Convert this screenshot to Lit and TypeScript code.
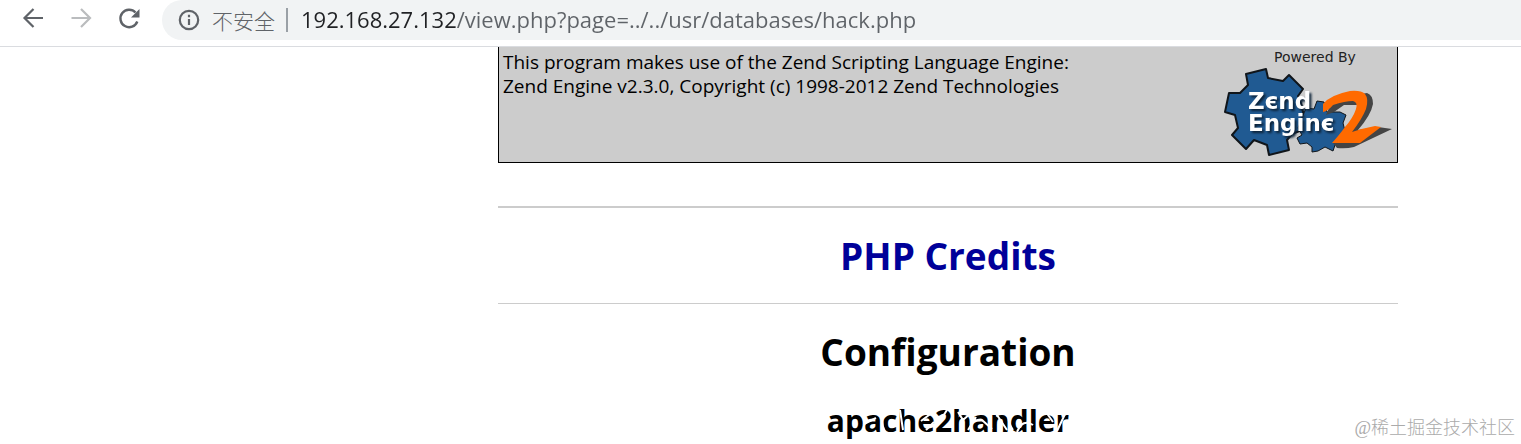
import { LitElement, html, css } from "lit";
import { customElement } from "lit/decorators.js";

@customElement("zend-logo")
class ZendLogo extends LitElement {
  static styles = css`
    :host { display: block; flex: none; }
    .logo { display: block; width: 178px; height: 112px; }
    .powered { font: 14px "DejaVu Sans", sans-serif; fill: #222; }
    .name { font: bold 23px "DejaVu Sans", sans-serif; fill: #fff; filter: drop-shadow(2px 2px 1px #0c2238); }
  `;

  render() {
    return html`
      <svg class="logo" viewBox="1219 47 178 112" role="img" aria-label="Powered by Zend Engine 2">
        <g fill="#205a92" stroke="#10151a" stroke-width="2" stroke-linejoin="round">
          <path d="M1246 74L1266 69L1268 78L1283 81L1289 75L1303 89L1298 96Q1302 104 1303 112L1307 128L1292 134L1287 140L1289 150L1269 155L1267 145L1254 140L1246 149L1232 135L1238 128L1235 115L1225 112L1229 93L1240 93L1248 85Z"/>
          <path stroke-width="1" d="M1306 108L1314 109L1317 101L1324 102L1327 112L1340 112L1346 115L1343 123L1346 135L1335 145L1333 151L1325 147L1318 151L1312 152L1312 147L1307 143L1300 144L1297 138L1302 135L1298 128Z"/>
        </g>
        <path fill="#444" d="M1326 115L1329 108Q1341 96 1355 95L1367 93Q1373 95 1373 104Q1371 115 1358 130L1378 127L1392 129L1354 147Q1346 149 1337 148L1333 143L1349 127Q1358 115 1358 105L1344 105L1334 112Z"/>
        <path fill="#ff6a00" d="M1323 112V104Q1330 95 1350 91Q1361 90 1365 94Q1369 99 1366 109Q1362 119 1352 132Q1364 128 1375 126L1381 127L1360 143H1332Q1340 134 1345 127Q1353 118 1356 109Q1358 102 1353 101Q1345 101 1333 105Q1328 111 1323 112Z"/>
        <text class="powered" x="1274" y="62">Powered By</text>
        <text class="name"><tspan x="1248" y="109">Zєnd</tspan><tspan x="1248" y="131">Enginє</tspan></text>
      </svg>
    `;
  }
}

@customElement("app-root")
class AppRoot extends LitElement {
  static styles = css`
    :host { display: flex; flex-direction: column; min-height: 100vh; position: relative; background: #fff; color: #000; font-family: "Open Sans", "Noto Sans CJK SC", sans-serif; }
    .toolbar { display: flex; align-items: flex-start; height: 46px; border-bottom: 1px solid #dadce0; }
    .nav { display: flex; gap: 20px; padding: 4px 19px 0; }
    .nav button { width: 28px; height: 28px; padding: 0; border: 0; background: none; color: #5f6368; }
    .nav button:disabled { color: #babcbe; }
    .icon { display: block; flex: none; width: 28px; height: 28px; }
    .omnibox { flex: 1; display: flex; align-items: center; height: 40px; padding-left: 13px; background: #f1f3f4; border-radius: 20px 0 0 20px; color: #5f6368; }
    .insecure { margin-left: 9px; padding-right: 11px; border-right: 2px solid #9aa0a6; font: 21px/24px "Noto Sans CJK SC", sans-serif; font-weight: 300; white-space: nowrap; }
    .address { flex: 1; min-width: 0; margin-left: 13px; padding: 0 0 2px; border: 0; outline: 0; font: 22px/30px "Open Sans", sans-serif; color: transparent; background: linear-gradient(90deg, #202124 155px, #5f6368 155px); background-clip: text; -webkit-background-clip: text; }
    .page { padding-left: 375px; }
    .column { max-width: 900px; margin: 0 auto; }
    .engine { display: flex; justify-content: space-between; align-items: flex-start; height: 115px; border: 1px solid #000; border-top: 0; background: #ccc; }
    .engine p { margin: 0; padding: 3px 4px; font-size: 19px; line-height: 24px; }
    hr { margin: 0; border: 0; height: 1px; background: #ccc; }
    .thick { margin-top: 43px; height: 2px; }
    h1 { margin: 0; text-align: center; font-size: 37px; line-height: 95px; }
    .credits { color: #009; text-decoration: none; }
    h2 { position: relative; margin: 0; text-align: center; font-size: 30px; line-height: 44px; }
    .scratches { position: absolute; left: 50%; top: 0; width: 260px; height: 40px; margin-left: -130px; }
    .credit { position: absolute; right: 6px; bottom: 4px; font: 18px/24px "Liberation Serif", "Noto Sans CJK SC", serif; font-weight: 300; color: #aaa; }
  `;

  render() {
    return html`
      <header class="toolbar">
        <nav class="nav">
          <button aria-label="Back"><svg class="icon" viewBox="0 0 28 28" fill="none" stroke="currentColor" stroke-width="2.2"><path d="M24 14H6M14.500 5L5.500 14l9 9"/></svg></button>
          <button aria-label="Forward" disabled><svg class="icon" viewBox="0 0 28 28" fill="none" stroke="currentColor" stroke-width="2.2"><path d="M4.500 14h18M14 5l9 9-9 9"/></svg></button>
          <button aria-label="Reload"><svg class="icon" viewBox="0 0 28 28"><path fill="none" stroke="currentColor" stroke-width="2.400" d="M20.500 8.500A8.700 8.700 0 1 0 22.300 17.500"/><path fill="currentColor" d="M24.500 5v8.500h-8.500z"/></svg></button>
        </nav>
        <div class="omnibox">
          <svg class="icon" viewBox="0 0 28 28" fill="none" stroke="currentColor" stroke-width="2.2" aria-hidden="true"><circle cx="14" cy="14" r="9.200"/><path d="M14 13v6M14 8.800v2.400"/></svg>
          <span class="insecure">不安全</span>
          <input class="address" aria-label="Address" value="192.168.27.132/view.php?page=../../usr/databases/hack.php">
        </div>
      </header>
      <main class="page">
        <div class="column">
          <section class="engine">
            <p>This program makes use of the Zend Scripting Language Engine:<br>Zend Engine v2.3.0, Copyright (c) 1998-2012 Zend Technologies</p>
            <zend-logo></zend-logo>
          </section>
          <hr class="thick">
          <h1><a class="credits" href="#credits">PHP Credits</a></h1>
          <hr>
          <h1>Configuration</h1>
          <h2>apache2handler
            <svg class="scratches" viewBox="818 399 260 40" fill="none" stroke="#fff" stroke-width="2" aria-hidden="true">
              <path d="M864 424l12-6M884 412q-4 10 1 20M900 410l3 20M921 421l12-9M926 430l8-8M938 424l9-14M958 412l5 8 8-7M968 430l8-13M982 420l10 9M995 412l12 18M1009 412q-2 10 4 18M1017 432q6-14 16-7M1046 412l7 10M1057 431l9-19"/>
            </svg>
          </h2>
        </div>
      </main>
      <div class="credit">@稀土掘金技术社区</div>
    `;
  }
}
